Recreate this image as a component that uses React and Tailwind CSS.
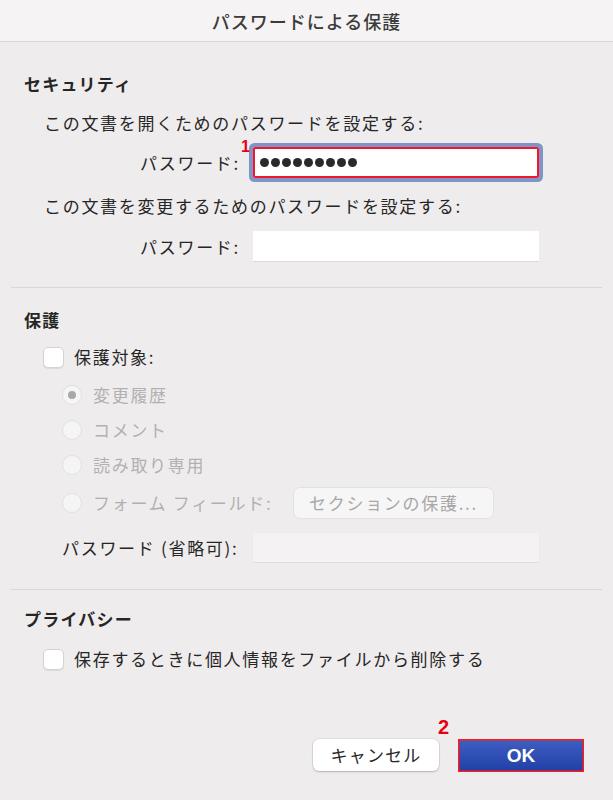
import React from 'react';

const Checkbox = () => (
    <div className="w-[21px] h-[21px] rounded-[5px] bg-white border border-[#d4d2d3] shadow-[0_1px_1px_rgba(0,0,0,0.08)] shrink-0" />
);

const Radio = ({ checked }) => (
    <div className="w-[20px] h-[20px] rounded-full bg-[#f6f5f5] border border-[#e2e0e1] flex items-center justify-center shrink-0">
        {checked && <div className="w-[8px] h-[8px] rounded-full bg-[#a9a7a8]" />}
    </div>
);

const App = () => {
    return (
        <div className="w-[613px] h-[800px] bg-[#efeced] flex flex-col font-['Noto_Sans_CJK_JP','Noto_Sans',sans-serif] text-[17px] leading-[24px] text-[#262626] tracking-[1.7px]">
            <div className="h-[42px] shrink-0 flex items-center justify-center bg-[#f5f3f3] border-b border-[#d7d5d5] text-[18px] font-medium text-[#3b3b3b] tracking-[1px]">
                パスワードによる保護
            </div>

            {/* セキュリティ */}
            <div className="flex flex-col px-[24px] pt-[30px]">
                <div className="font-bold tracking-[1.2px]">セキュリティ</div>
                <div className="mt-[17px] pl-[20px] leading-[20px]">この文書を開くためのパスワードを設定する:</div>
                <div className="mt-[14px] flex items-center -ml-[24px]">
                    <div className="relative w-[240px] text-right">
                        パスワード:
                        <span className="absolute right-[-10px] top-[-12px] leading-[16px] text-[#e60012] font-bold text-[16px] font-['Liberation_Sans',sans-serif] tracking-normal">1</span>
                    </div>
                    <div className="ml-[13px] w-[286px] h-[31px] bg-white shadow-[inset_0_0_0_2px_#f5162c] ring-[4px] ring-[#7f95c8] rounded-[2px] flex items-center gap-[2px] pl-[7px]">
                        {Array.from({ length: 9 }).map((_, i) => (
                            <div key={i} className="w-[9px] h-[9px] rounded-full bg-[#2a2a2a]" />
                        ))}
                    </div>
                </div>
                <div className="mt-[16px] pl-[20px]">この文書を変更するためのパスワードを設定する:</div>
                <div className="mt-[13px] flex items-center -ml-[24px]">
                    <div className="w-[240px] text-right">パスワード:</div>
                    <div className="ml-[13px] w-[286px] h-[31px] bg-white border-b border-[#dcdadb]" />
                </div>
            </div>

            <div className="mx-[11px] mt-[25px] h-px bg-[#d9d7d8]" />

            {/* 保護 */}
            <div className="flex flex-col px-[24px] pt-[20px]">
                <div className="font-bold tracking-[1.2px]">保護</div>
                <div className="mt-[13px] ml-[19px] flex items-center gap-[10px]">
                    <Checkbox />
                    <span>保護対象:</span>
                </div>
                <div className="ml-[38px] text-[#b2b0b1]">
                    <div className="mt-[14px] flex items-center gap-[11px]">
                        <Radio checked />
                        <span>変更履歴</span>
                    </div>
                    <div className="mt-[11px] flex items-center gap-[11px]">
                        <Radio />
                        <span>コメント</span>
                    </div>
                    <div className="mt-[11px] flex items-center gap-[11px]">
                        <Radio />
                        <span>読み取り専用</span>
                    </div>
                    <div className="mt-[10px] h-[32px] flex items-center">
                        <Radio />
                        <span className="ml-[11px] w-[200px]">フォーム フィールド:</span>
                        <div className="w-[201px] h-[32px] rounded-[7px] bg-[#f7f6f6] border border-[#e3e1e2] flex items-center justify-center text-[#a8a6a7]">
                            セクションの保護...
                        </div>
                    </div>
                </div>
                <div className="mt-[14px] ml-[38px] flex items-center">
                    <span className="w-[191px]">パスワード (省略可):</span>
                    <div className="w-[286px] h-[30px] bg-[#f4f2f2] border-b border-[#e0dedf]" />
                </div>
            </div>

            <div className="mx-[11px] mt-[26px] h-px bg-[#d9d7d8]" />

            {/* プライバシー */}
            <div className="flex flex-col px-[24px] pt-[17px]">
                <div className="font-bold tracking-[1.2px]">プライバシー</div>
                <div className="mt-[16px] ml-[19px] flex items-center gap-[10px]">
                    <Checkbox />
                    <span>保存するときに個人情報をファイルから削除する</span>
                </div>
            </div>

            <div className="mt-auto pb-[28px] pr-[29px] flex justify-end gap-[19px]">
                <button className="w-[126px] h-[32px] rounded-[6px] bg-white shadow-[0_0_0_0.5px_rgba(0,0,0,0.12),0_1px_2px_rgba(0,0,0,0.2)] text-[17px] text-[#262626] tracking-[1.2px]">
                    キャンセル
                </button>
                <div className="relative">
                    <span className="absolute left-[-20px] top-[-22px] text-[#e60012] font-bold text-[20px] leading-[20px] font-['Liberation_Sans',sans-serif] tracking-normal">2</span>
                    <button className="w-[126px] h-[33px] bg-gradient-to-b from-[#3f5fc3] to-[#1f3fa6] shadow-[inset_0_0_0_1.5px_#ff1a1a] text-white font-semibold text-[19px] tracking-normal font-['Liberation_Sans',sans-serif]">
                        OK
                    </button>
                </div>
            </div>
        </div>
    );
};

export default App;
